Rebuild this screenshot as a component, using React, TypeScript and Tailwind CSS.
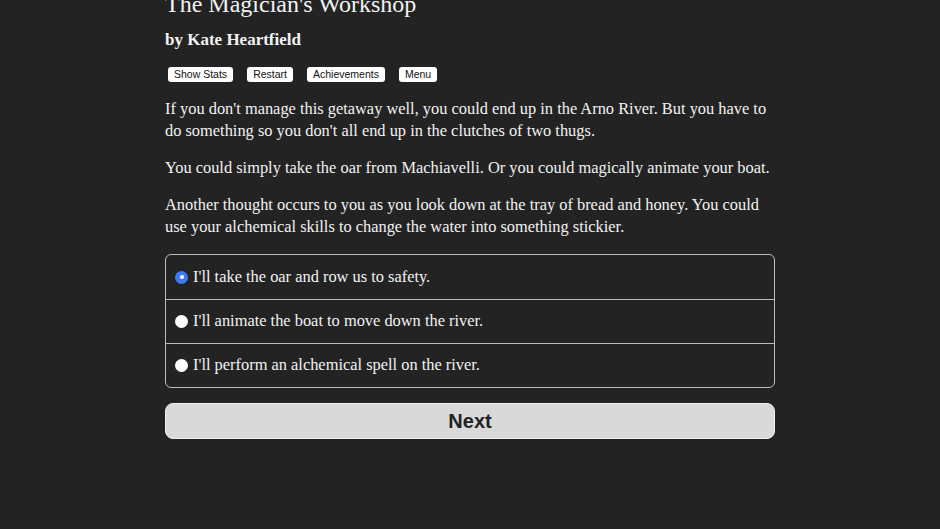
import React from "react"

const choices = [
  "I'll take the oar and row us to safety.",
  "I'll animate the boat to move down the river.",
  "I'll perform an alchemical spell on the river.",
]

const serif = "font-['Liberation_Serif','Times_New_Roman',serif]"

export default function App() {
  const [picked, setPicked] = React.useState(0)

  return (
    <div className={`min-h-screen overflow-hidden bg-[#232323] pb-[90px] text-[#f2f2f2] ${serif}`}>
      <div className="mx-auto -mt-[11px] w-[610px]">
        {/* Header */}
        <h1 className="text-[24px] leading-[30px]">The Magician's Workshop</h1>
        <h2 className="mt-[10px] text-[17px] leading-[22px] font-bold">by Kate Heartfield</h2>

        <div className="mt-[16px] flex gap-[14px] px-[3px] font-['Liberation_Sans',Arial,sans-serif]">
          {["Show Stats", "Restart", "Achievements", "Menu"].map((label) => (
            <button
              key={label}
              className="h-[15px] rounded-[3px] bg-white px-[6px] text-[10.5px] leading-[15px] text-[#111]"
            >
              {label}
            </button>
          ))}
        </div>

        {/* Story text */}
        <div className="mt-[16px] text-[16.4px] leading-[22px]">
          <p>
            If you don't manage this getaway well, you could end up in the Arno River. But you have to do
            something so you don't all end up in the clutches of two thugs.
          </p>
          <p className="mt-[15px]">You could simply take the oar from Machiavelli. Or you could magically animate your boat.</p>
          <p className="mt-[15px]">
            Another thought occurs to you as you look down at the tray of bread and honey. You could use your
            alchemical skills to change the water into something stickier.
          </p>
        </div>

        {/* Choices */}
        <div className="mt-[16px] overflow-hidden rounded-[6px] border border-[#bdbdbd]">
          {choices.map((text, i) => (
            <label
              key={text}
              className={`flex h-[44px] cursor-pointer items-center gap-[5px] pl-[9px] text-[16.4px] ${
                i > 0 ? "border-t border-[#bdbdbd]" : ""
              }`}
              onClick={() => setPicked(i)}
            >
              <span
                className={`flex h-[13px] w-[13px] items-center justify-center rounded-full ${
                  picked === i ? "bg-[#3b7bf5]" : "bg-white"
                }`}
              >
                {picked === i && <span className="h-[4px] w-[4px] rounded-full bg-white" />}
              </span>
              {text}
            </label>
          ))}
        </div>

        <button className="mt-[15px] h-[36px] w-full rounded-[8px] border border-[#f0f0f0] bg-[#d9d9d9] font-['Liberation_Sans',Arial,sans-serif] text-[20px] font-bold text-[#222]">
          Next
        </button>
      </div>
    </div>
  )
}
